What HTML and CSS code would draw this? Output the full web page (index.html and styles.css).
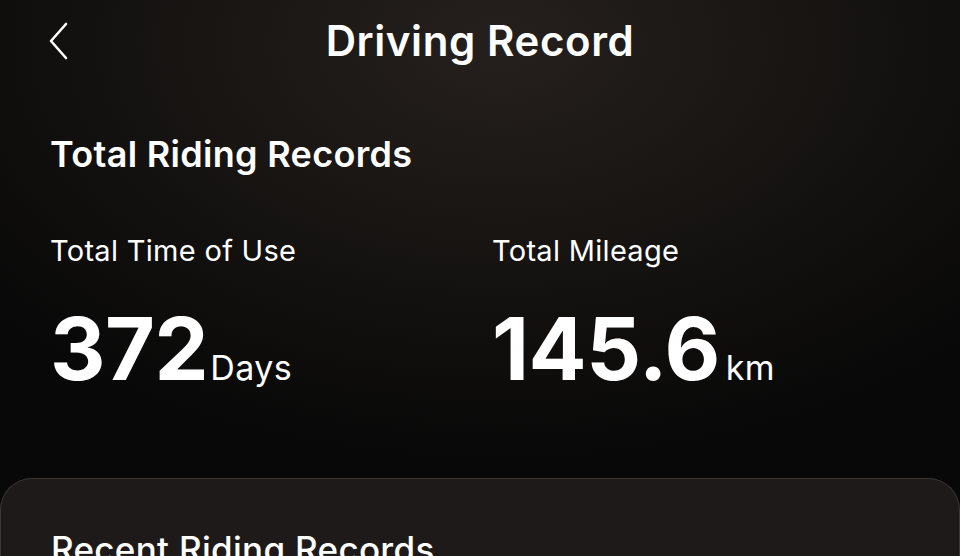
FILE: index.html
```html
<!DOCTYPE html>
<html lang="en">
<head>
    <meta charset="UTF-8">
    <meta name="viewport" content="width=device-width, initial-scale=1.0">
    <title>Driving Record</title>
    <link rel="stylesheet" href="styles.css">
</head>
<body>
    <div class="page">
        <header class="topbar">
            <button class="back" aria-label="Back">
                <svg width="26" height="40" viewBox="0 0 26 40">
                    <path d="M20 3 L5 20 L20 37" fill="none" stroke="#fff" stroke-width="2.6" stroke-linecap="round" stroke-linejoin="round"/>
                </svg>
            </button>
            <h1 class="title">Driving Record</h1>
            <span></span>
        </header>

        <section class="totals">
            <h2 class="section-title">Total Riding Records</h2>
            <div class="stats">
                <div class="stat">
                    <p class="stat-label">Total Time of Use</p>
                    <p class="stat-value">372<span class="unit">Days</span></p>
                </div>
                <div class="stat">
                    <p class="stat-label">Total Mileage</p>
                    <p class="stat-value">145.6<span class="unit km">km</span></p>
                </div>
            </div>
        </section>

        <section class="recent">
            <h2 class="recent-title">Recent Riding Records</h2>
        </section>
    </div>
</body>
</html>
```

FILE: styles.css
```css
html, body{
    margin: 0;
    padding: 0;
    height: 100%;
    background: #060606;
}
body{
    font-family: Inter, "Noto Sans", "Liberation Sans", sans-serif;
    color: #fff;
    overflow: hidden;
}
.page{
    height: 556px;
    overflow: hidden;
    background:
        radial-gradient(ellipse 70% 75% at 52% 8%, #25201d 0%, #181513 45%, #080808 100%);
}
.topbar{
    display: grid;
    grid-template-columns: 1fr auto 1fr;
    align-items: center;
    height: 80px;
    padding: 0 46px;
}
.back{
    justify-self: start;
    background: none;
    border: none;
    padding: 0;
    margin-top: 2px;
    display: flex;
}
.title{
    margin: 0;
    font-size: 42px;
    font-weight: 600;
    letter-spacing: 0.6px;
    line-height: 1;
    padding-top: 2px;
}
.totals{
    padding: 52px 50px 0;
}
.section-title{
    margin: 0;
    font-size: 36px;
    font-weight: 600;
    letter-spacing: 0.3px;
    line-height: 44px;
}
.stats{
    display: grid;
    grid-template-columns: 442px 1fr;
    margin-top: 58px;
}
.stat-label{
    margin: 0;
    font-size: 29px;
    font-weight: 400;
    letter-spacing: 0.3px;
    line-height: 34px;
}
.stat-value{
    margin: 41px 0 0;
    font-size: 86px;
    font-weight: 700;
    letter-spacing: -0.5px;
    line-height: 80px;
}
.unit{
    font-size: 34px;
    font-weight: 400;
    letter-spacing: 0.4px;
    margin-left: 2px;
}
.unit.km{
    margin-left: 6px;
}
.recent{
    margin-top: 70px;
    height: 200px;
    background: #1e1a19;
    border: 1px solid #3b3735;
    border-bottom: none;
    border-radius: 32px 32px 0 0;
    padding: 49px 50px 0;
}
.recent-title{
    margin: 0;
    font-size: 35px;
    font-weight: 500;
    letter-spacing: 0.3px;
    line-height: 42px;
}
```
